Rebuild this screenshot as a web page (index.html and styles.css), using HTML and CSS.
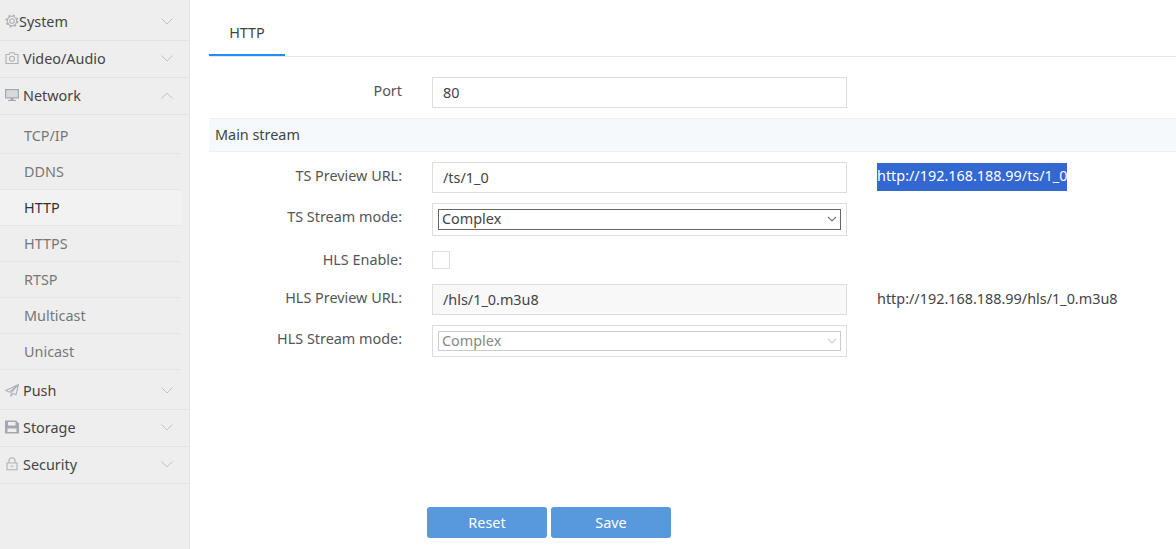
FILE: index.html
```html
<!DOCTYPE html>
<html lang="en">
<head>
<meta charset="utf-8">
<title>HTTP</title>
<link rel="stylesheet" href="styles.css">
</head>
<body>
<div class="app">
  <nav class="side">
    <div class="item first"><svg class="ic tight" viewBox="0 0 14 14"><circle cx="7" cy="7" r="2.300"/><circle cx="7" cy="7" r="4.700"/><circle class="cog" cx="7" cy="7" r="5.700"/></svg><span>System</span><svg class="chev" viewBox="0 0 12 7"><path d="M.5.5 6 6 11.500.5"/></svg></div>
    <div class="item"><svg class="ic" viewBox="0 0 14 14"><path d="M1 3.500h3L5 1.800h4l1 1.700h3v9H1z"/><circle cx="7" cy="7.800" r="2.500"/></svg><span>Video/Audio</span><svg class="chev" viewBox="0 0 12 7"><path d="M.5.5 6 6 11.500.5"/></svg></div>
    <div class="item"><svg class="ic solid" viewBox="0 0 14 14"><path d="M0 1h14v9.500H8.500v1.500h2.500v1H3v-1h2.500v-1.500H0zM1.300 2.300v6.900h11.400V2.300z"/><path d="M1.300 2.300h11.400v6.900H1.300z" opacity=".3"/></svg><span>Network</span><svg class="chev" viewBox="0 0 12 7"><path d="M.5 6.500 6 1l5.500 5.500"/></svg></div>
    <a class="sub">TCP/IP</a>
    <a class="sub">DDNS</a>
    <a class="sub on">HTTP</a>
    <a class="sub">HTTPS</a>
    <a class="sub">RTSP</a>
    <a class="sub">Multicast</a>
    <a class="sub">Unicast</a>
    <div class="item tall"><svg class="ic" viewBox="0 0 14 14"><path d="M13.500 1.500.8 7.500l3.700 1.700L13.500 1.500 6 10v3l2.200-2.500 2.800 1.200z"/></svg><span>Push</span><svg class="chev" viewBox="0 0 12 7"><path d="M.5.5 6 6 11.500.5"/></svg></div>
    <div class="item"><svg class="ic solid" viewBox="0 0 14 14"><path d="M0 .5h11l3 3V13.500H0zM3 2v3.500h7.500V2zM2.500 8.500v3.500h9V8.500z"/></svg><span>Storage</span><svg class="chev" viewBox="0 0 12 7"><path d="M.5.5 6 6 11.500.5"/></svg></div>
    <div class="item"><svg class="ic" viewBox="0 0 14 14"><path d="M2 6h10v6.800H2zM4 6V3.800a3 3 0 0 1 6 0V6M5.500 9.300h3"/></svg><span>Security</span><svg class="chev" viewBox="0 0 12 7"><path d="M.5.5 6 6 11.500.5"/></svg></div>
  </nav>
  <main class="main">
    <div class="tabs"><div class="tab">HTTP</div></div>
    <div class="row port"><label>Port</label><div class="field">80</div></div>
    <div class="band">Main stream</div>
    <div class="row ts"><label>TS Preview URL:</label><div class="field">/ts/1_0</div><span class="url sel">http://192.168.188.99/ts/1_0</span></div>
    <div class="row mode"><label>TS Stream mode:</label><div class="selbox"><div class="select">Complex<svg class="sc" viewBox="0 0 10 6"><path d="M1 1l4 4 4-4"/></svg></div></div></div>
    <div class="row check"><label>HLS Enable:</label><div class="box"></div></div>
    <div class="row hls"><label>HLS Preview URL:</label><div class="field off">/hls/1_0.m3u8</div><span class="url">http://192.168.188.99/hls/1_0.m3u8</span></div>
    <div class="row mode dis"><label>HLS Stream mode:</label><div class="selbox"><div class="select">Complex<svg class="sc" viewBox="0 0 10 6"><path d="M1 1l4 4 4-4"/></svg></div></div></div>
    <div class="actions"><button class="btn">Reset</button><button class="btn">Save</button></div>
  </main>
</div>
</body>
</html>
```
FILE: styles.css
```css
* { box-sizing: border-box; }
html, body { margin: 0; height: 100%; overflow: hidden; }
body { font-family: "Noto Sans", "Open Sans", sans-serif; font-size: 14.4px; color: #444; background: #fff; }
.app { display: flex; height: 549px; }
.side { width: 190px; flex: none; background: #eee; border-right: 1px solid #e3e3e3; }
.item { height: 37px; display: flex; align-items: center; padding: 0 16px 2px 5px; border-bottom: 1px solid #e2e2e2; color: #444; }
.item.first { height: 41px; padding-top: 2px; padding-bottom: 0; }
.item.tall { height: 40px; padding-top: 2px; padding-bottom: 1px; }
.item span { flex: 1; }
.ic { width: 14px; height: 14px; margin-right: 4px; fill: none; stroke: #aeb1b6; stroke-width: 1.100; flex: none; }
.ic.tight { margin-right: 0; }
.ic .cog { stroke-width: 1.500; stroke-dasharray: 2.200 2.280; }
.ic.solid { fill: #a3a8b0; stroke: none; fill-rule: evenodd; }
.chev { width: 12px; height: 7px; fill: none; stroke: #c2c2c2; stroke-width: 1; }
.sub { display: flex; align-items: center; height: 36px; width: 181px; padding-left: 24px; color: #777; border-bottom: 1px solid #e6e6e6; }
.item + .sub { margin-top: 3px; }
.sub.on { color: #333; background: #f2f2f2; }
.main { flex: 1; min-width: 0; padding-left: 19px; position: relative; }
.tabs { height: 57px; border-bottom: 1px solid #e6e6e6; }
.tab { width: 76px; height: 56px; padding-top: 23px; line-height: 20px; text-align: center; color: #444; border-bottom: 2px solid #1e8fff; }
.row { display: flex; align-items: center; }
.row label { width: 193px; text-align: right; margin-right: 30px; color: #555; flex: none; }
.field { width: 415px; height: 31px; border: 1px solid #ddd; padding: 0 10px; display: flex; align-items: center; color: #444; flex: none; }
.field.off { background: #f8f8f8; }
.port { margin-top: 20px; }
.port label { margin-top: -4px; }
.band { margin-top: 10px; height: 34px; background: #f5f9fc; border: 1px solid #eef0f2; border-width: 1px 0; padding: 0 6px 2px; display: flex; align-items: center; color: #444; }
.ts { margin-top: 10px; }
.ts label, .hls label { margin-top: -4px; }
.url { margin-left: 30px; margin-top: -3px; color: #444; white-space: nowrap; }
.url.sel { background: #3367d1; color: #fff; margin-top: -2px; height: 28px; line-height: 26px; }
.mode { margin-top: 10px; }
.mode label { margin-top: -7px; }
.selbox { width: 415px; height: 33px; border: 1px solid #ddd; padding: 5px; flex: none; }
.select { position: relative; height: 21px; border: 1px solid #666; padding-left: 3px; line-height: 17px; color: #444; }
.sc { position: absolute; right: 3px; top: 6px; width: 10px; height: 6px; fill: none; stroke: #777; stroke-width: 1.100; }
.dis { margin-top: 10px; }
.dis label { margin-top: -6px; }
.dis .selbox { height: 32px; }
.dis .select { height: 20px; border-color: #ccc; color: #888; }
.dis .sc { stroke: #ccc; }
.check { margin-top: 15px; height: 18px; }
.check label { margin-top: -1px; }
.box { width: 18px; height: 18px; border: 1px solid #ddd; }
.hls { margin-top: 15px; }
.actions { position: absolute; left: 237px; top: 507px; display: flex; gap: 4px; }
.btn { width: 120px; height: 31px; border: 0; border-radius: 3px; background: #5898dd; color: #fff; font: inherit; padding: 0; }
```
